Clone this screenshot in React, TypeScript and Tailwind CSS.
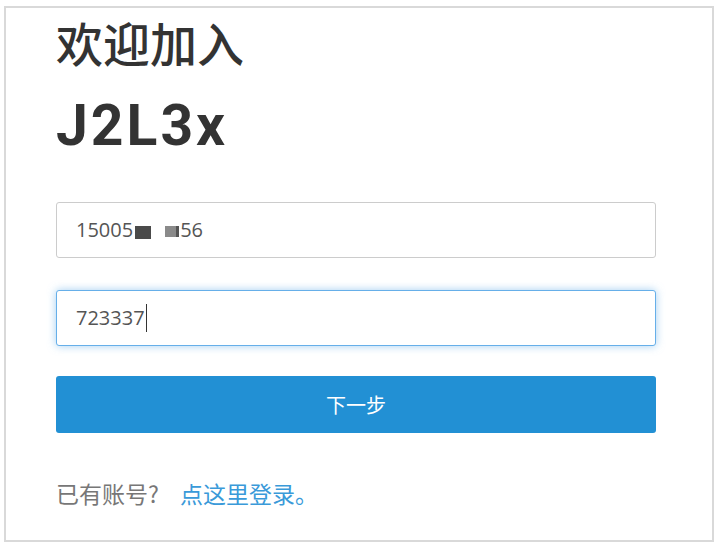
import React from "react";

export default function App() {
  const cjk = { fontFamily: '"Noto Sans CJK SC", "Noto Sans", sans-serif' };
  return (
    <div className="w-[718px] h-[546px] bg-white overflow-hidden">
      <div className="ml-[4px] mt-[6px] w-[710px] h-[536px] border-2 border-[#d9d9d9] pl-[50px] pr-[54px]">
        <h1
          className="mt-[6px] text-[47px] leading-[56px] font-medium text-[#333]"
          style={cjk}
        >
          欢迎加入
        </h1>
        <div
          className="mt-[23px] text-[57px] leading-[66px] font-bold text-[#333] tracking-[3px]"
          style={{ fontFamily: 'Roboto, "Liberation Sans", sans-serif' }}
        >
          J2L3x
        </div>
        <div className="mt-[43px] flex flex-col gap-[32px]">
          <div
            className="h-[56px] w-[600px] rounded-[3px] border border-[#cccccc] bg-white flex items-center pl-[19px] text-[20px] text-[#555]"
            style={{ fontFamily: '"Open Sans", sans-serif' }}
          >
            <span>15005</span>
            <span className="relative ml-[2px] inline-block w-[16px] h-[13px] bg-[#4a4a4a] mt-[4px]" />
            <span className="inline-block w-[14px]" />
            <span className="inline-block w-[11px] h-[11px] bg-[#8a8a8a] mt-[3px]" />
            <span className="inline-block w-[3px] h-[11px] bg-[#555] mt-[3px]" />
            <span className="ml-[1px]">56</span>
          </div>
          <div
            className="h-[56px] w-[600px] rounded-[3px] border border-[#66afe9] bg-white flex items-center pl-[19px] text-[20px] text-[#555] shadow-[0_0_8px_rgba(102,175,233,0.6)]"
            style={{ fontFamily: '"Open Sans", sans-serif' }}
          >
            <span>723337</span>
            <span className="inline-block w-[1px] h-[28px] bg-[#333] ml-[1px]" />
          </div>
        </div>
        <button
          className="mt-[30px] h-[57px] w-[600px] rounded-[3px] bg-[#2290d4] text-white text-[20px] flex items-center justify-center"
          style={cjk}
        >
          下一步
        </button>
        <div className="mt-[45px] text-[23px] leading-[30px]" style={cjk}>
          <span className="text-[#777]">已有账号?</span>
          <span className="ml-[21px] text-[#3a9ad9]">点这里登录。</span>
        </div>
      </div>
    </div>
  );
}
